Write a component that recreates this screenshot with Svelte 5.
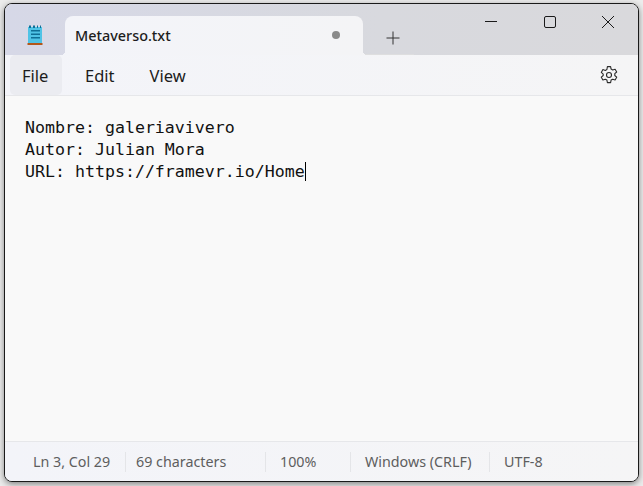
<script>
	const lines = ["Nombre: galeriavivero", "Autor: Julian Mora", "URL: https://framevr.io/Home"];
	const status = [
		{ label: "Ln 3, Col 29", width: 120, pad: 28 },
		{ label: "69 characters", width: 140, pad: 10 },
		{ label: "100%", width: 85, pad: 14 },
		{ label: "Windows (CRLF)", width: 139, pad: 14 },
		{ label: "UTF-8", width: 100, pad: 14 }
	];
</script>

<div class="desk">
	<div class="window">
		<div class="titlebar">
			<div class="app-icon">
				<svg width="16" height="21" viewBox="0 0 16 21">
					<rect x="1" y="2" width="14" height="16" fill="#4fc3e6" />
					<rect x="2" y="0.5" width="2" height="2.5" fill="#0f6f96" />
					<rect x="6" y="0.5" width="2" height="2.5" fill="#0f6f96" />
					<rect x="10" y="0.5" width="1" height="2.5" fill="#0f6f96" />
					<rect x="13" y="0.5" width="1" height="2.5" fill="#0f6f96" />
					<rect x="4" y="5" width="9" height="1.5" fill="#0f6f96" />
					<rect x="4" y="8.5" width="9" height="1.5" fill="#0f6f96" />
					<rect x="4" y="12" width="9" height="1.5" fill="#0f6f96" />
					<rect x="0.5" y="18" width="15" height="2" fill="#b3571a" />
				</svg>
			</div>
			<div class="tab">
				<span class="tab-name">Metaverso.txt</span>
				<span class="dot"></span>
			</div>
			<div class="new-tab">
				<svg width="14" height="14" viewBox="0 0 14 14">
					<path d="M7 0.5v13M0.5 7h13" stroke="#333" stroke-width="1" fill="none" />
				</svg>
			</div>
			<div class="controls">
				<svg width="14" height="14" viewBox="0 0 14 14">
					<path d="M1 6.5h12" stroke="#1a1a1a" stroke-width="1" />
				</svg>
				<svg width="14" height="14" viewBox="0 0 14 14">
					<rect x="1.5" y="1.5" width="11" height="11" rx="1.5" fill="none" stroke="#1a1a1a" stroke-width="1" />
				</svg>
				<svg width="14" height="14" viewBox="0 0 14 14">
					<path d="M1 1l12 12M13 1L1 13" stroke="#1a1a1a" stroke-width="1" />
				</svg>
			</div>
		</div>

		<div class="menubar">
			<span class="menu active">File</span>
			<span class="menu">Edit</span>
			<span class="menu">View</span>
			<svg class="gear" width="20" height="20" viewBox="0 0 20 20">
				<path d="M8.4 1.6h3.2l.5 2.5 1.6.9 2.4-.8 1.6 2.8-1.9 1.7v1.8l1.9 1.7-1.6 2.8-2.4-.8-1.6.9-.5 2.5H8.4l-.5-2.500-1.6-.9-2.4.8-1.6-2.8 1.9-1.7V9.1L2.300 7.400l1.600-2.800 2.400.8 1.600-.9z" fill="none" stroke="#2b2b2b" stroke-width="1.1" stroke-linejoin="round" />
				<circle cx="10" cy="10" r="2.5" fill="none" stroke="#2b2b2b" stroke-width="1.1" />
			</svg>
		</div>

		<div class="editor">
			{#each lines as line, i}
				<div class="line">{line}{#if i === 2}<span class="caret"></span>{/if}</div>
			{/each}
		</div>

		<div class="statusbar">
			{#each status as s, i}
				<span class="cell" class:first={i === 0} style:width={s.width + "px"} style:padding-left={s.pad + "px"}>{s.label}</span>
			{/each}
		</div>
	</div>
</div>

<style>
	:global(body) {
		margin: 0;
	}
	.desk {
		width: 643px;
		height: 486px;
		background: #ececec;
		overflow: hidden;
		font-family: "Noto Sans", sans-serif;
	}
	.window {
		width: 635px;
		height: 479px;
		margin: 3px 0 0 4px;
		box-sizing: border-box;
		border: 1px solid #1a1a1a;
		border-radius: 8px;
		overflow: hidden;
		display: flex;
		flex-direction: column;
		background: #f9f9f9;
		box-shadow: 0 2px 6px rgba(0, 0, 0, 0.45);
	}
	.titlebar {
		height: 51px;
		flex: none;
		display: flex;
		background: linear-gradient(90deg, #d6d8e7, #d8d9de 60%, #d9d9dc);
	}
	.app-icon {
		width: 60px;
		padding: 21px 0 0 22px;
		box-sizing: border-box;
		flex: none;
	}
	.tab {
		position: relative;
		width: 298px;
		height: 39px;
		margin-top: 12px;
		flex: none;
		display: flex;
		align-items: center;
		background: linear-gradient(90deg, #f3f4f9, #f4f4f6);
		border-radius: 8px 8px 0 0;
		padding: 0 23px 0 10px;
		box-sizing: border-box;
	}
	.tab::before,
	.tab::after {
		content: "";
		position: absolute;
		bottom: 0;
		width: 4px;
		height: 4px;
	}
	.tab::before {
		left: -4px;
		background: radial-gradient(circle at 0 0, transparent 4px, #f3f4f9 4px);
	}
	.tab::after {
		right: -4px;
		background: radial-gradient(circle at 100% 0, transparent 4px, #f4f4f6 4px);
	}
	.tab-name {
		flex: 1;
		font-size: 14.4px;
		font-weight: 500;
		color: #1c1c1c;
	}
	.dot {
		width: 8px;
		height: 8px;
		margin-top: -1px;
		border-radius: 50%;
		background: #8a8a8a;
	}
	.new-tab {
		width: 51px;
		padding: 24px 0 0 23px;
		box-sizing: border-box;
		flex: none;
		border-bottom: 1px solid #dededf;
	}
	.controls {
		flex: 1;
		display: flex;
		justify-content: flex-end;
		gap: 44.5px;
		padding: 11px 23px 0 0;
	}
	.menubar {
		height: 41px;
		flex: none;
		display: flex;
		align-items: center;
		padding: 0 0 0 5px;
		box-sizing: border-box;
		background: linear-gradient(90deg, #f3f4f9, #f5f5f6);
		border-bottom: 1px solid #e6e7ea;
	}
	.menu {
		height: 40px;
		box-sizing: border-box;
		line-height: 42px;
		padding: 0 12px;
		margin-right: 11px;
		font-size: 16.5px;
		color: #1c1c1c;
		border-radius: 5px;
	}
	.menu.active {
		width: 52px;
		background: #ebecf1;
	}
	.gear {
		margin-left: auto;
		margin-right: 19px;
	}
	.editor {
		flex: 1;
		padding: 21px 0 0 20px;
		font-family: "DejaVu Sans Mono", monospace;
		font-size: 16.6px;
		line-height: 22px;
		color: #111;
		background: #f9f9f9;
	}
	.line {
		white-space: pre;
		height: 22px;
	}
	.caret {
		display: inline-block;
		width: 1px;
		height: 19px;
		background: #000;
		vertical-align: -4px;
	}
	.statusbar {
		height: 40px;
		flex: none;
		display: flex;
		align-items: center;
		box-sizing: border-box;
		background: linear-gradient(90deg, #f3f4f9, #f5f5f6);
		border-top: 1px solid #e6e7ea;
		font-size: 14.3px;
		color: #5e5e5e;
	}
	.cell {
		box-sizing: border-box;
		height: 20px;
		line-height: 20px;
		border-left: 1px solid #e4e5e8;
		flex: none;
		white-space: nowrap;
	}
	.cell.first {
		border-left: none;
	}
</style>
